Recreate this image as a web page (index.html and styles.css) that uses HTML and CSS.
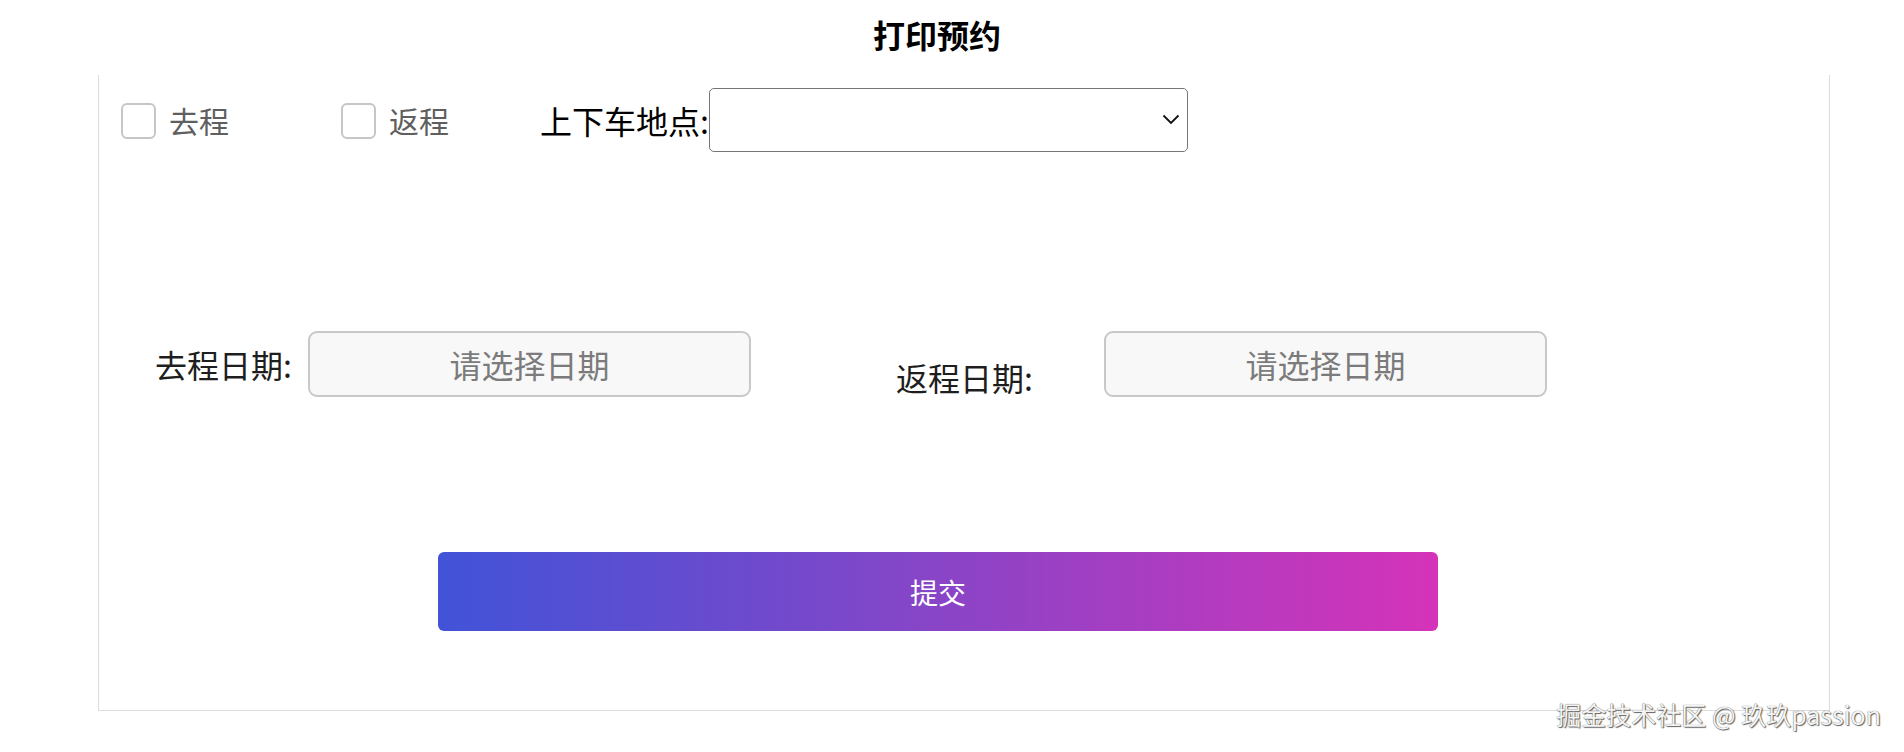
FILE: index.html
```html
<!DOCTYPE html>
<html lang="zh-CN">
<head>
<meta charset="utf-8">
<title>打印预约</title>
<link rel="stylesheet" href="styles.css">
</head>
<body>
  <h1 class="title">打印预约</h1>
  <div class="panel">
    <div class="row-top">
      <label class="check check-go"><span class="box"></span><span class="check-text">去程</span></label>
      <label class="check check-back"><span class="box"></span><span class="check-text">返程</span></label>
      <span class="place-label">上下车地点:</span>
      <div class="select-wrap">
        <select class="place-select"><option></option></select>
        <svg class="chevron" width="18" height="11" viewBox="0 0 18 11" aria-hidden="true"><path d="M1.5 1.5 L9 9 L16.5 1.5" fill="none" stroke="#111" stroke-width="1.8"/></svg>
      </div>
    </div>
    <div class="row-dates">
      <span class="date-label">去程日期:</span>
      <input class="date-input" type="text" placeholder="请选择日期" readonly>
      <span class="date-label date-label-back">返程日期:</span>
      <input class="date-input date-input-back" type="text" placeholder="请选择日期" readonly>
    </div>
    <button class="submit" type="button">提交</button>
  </div>
  <div class="watermark">掘金技术社区 @ 玖玖passion</div>
</body>
</html>
```

FILE: styles.css
```css
html, body {
  margin: 0;
  padding: 0;
  background: #ffffff;
}
body {
  position: relative;
  width: 1904px;
  height: 752px;
  overflow: hidden;
  font-family: "Noto Sans CJK SC", "Noto Sans", sans-serif;
  color: #000;
}
.title {
  margin: 0 0 21px -30px;
  padding-top: 14px;
  height: 40px;
  line-height: 40px;
  font-size: 32px;
  font-weight: 700;
  text-align: center;
}
.panel {
  margin-left: 98px;
  margin-right: 74px;
  border: 1px solid #dcdcdc;
  border-top: none;
  padding: 13px 0 79px 0;
}
.row-top {
  display: flex;
  align-items: center;
  height: 64px;
  padding-left: 22px;
}
.check {
  display: flex;
  align-items: center;
  gap: 13px;
}
.check-go { margin-right: 112px; }
.check-back { margin-right: 91px; }
.box {
  display: block;
  width: 31px;
  height: 32px;
  margin-top: 2px;
  border: 2px solid #c6c6c6;
  border-radius: 6px;
  background: #fff;
}
.check-text {
  font-size: 30px;
  line-height: 40px;
  color: #5f5f5f;
}
.place-label {
  font-size: 32px;
  line-height: 40px;
  color: #000;
}
.select-wrap {
  position: relative;
  width: 479px;
  height: 64px;
}
.place-select {
  appearance: none;
  -webkit-appearance: none;
  box-sizing: border-box;
  width: 479px;
  height: 64px;
  border: 1.5px solid #767676;
  border-radius: 5px;
  background: #fff;
  font-size: 20px;
  font-family: inherit;
  padding: 0 8px;
}
.chevron {
  position: absolute;
  right: 8px;
  top: 26px;
  pointer-events: none;
}
.row-dates {
  display: flex;
  align-items: center;
  margin-top: 179px;
  padding-left: 56px;
  height: 66px;
}
.date-label {
  font-size: 32px;
  line-height: 40px;
  color: #1e1e1e;
}
.date-label-back {
  align-self: flex-end;
  margin-left: 145px;
  width: 138px;
}
.date-input {
  box-sizing: border-box;
  width: 443px;
  height: 66px;
  margin-left: 16px;
  border: 2px solid #c8c8c8;
  border-radius: 9px;
  background: #f8f8f8;
  text-align: center;
  font-family: inherit;
  font-size: 32px;
  outline: none;
}
.date-input-back { margin-left: 70px; }
.date-input::placeholder {
  color: #7b7b7b;
}
.submit {
  display: block;
  margin-top: 155px;
  margin-left: 339px;
  width: 1000px;
  height: 79px;
  border: none;
  border-radius: 6px;
  background: linear-gradient(to right, #4153d8, #7a48ca 40%, #d533b9);
  color: #fff;
  font-family: inherit;
  font-size: 28px;
}
.watermark {
  position: absolute;
  right: 23px;
  top: 697px;
  font-size: 25px;
  line-height: 34px;
  color: #f4f4f4;
  text-shadow: 0 0 1px #444, 1px 1px 1px #666;
}
```
